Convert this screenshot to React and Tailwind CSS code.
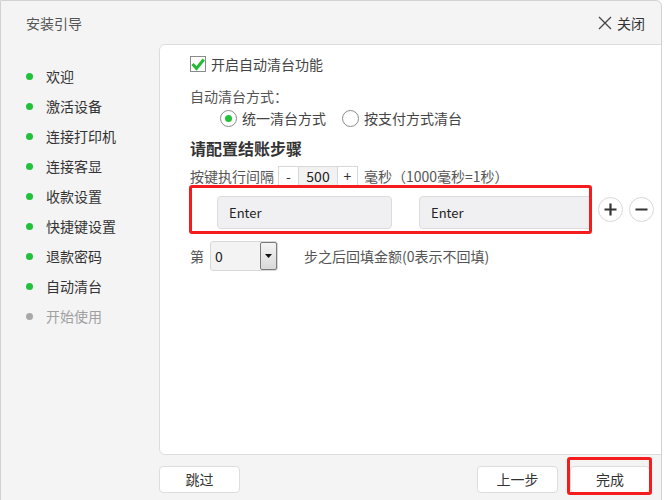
import React from "react";

const FONT = { fontFamily: '"Noto Sans CJK SC", "Noto Sans", sans-serif' };

const steps = [
  { t: "欢迎", done: true },
  { t: "激活设备", done: true },
  { t: "连接打印机", done: true },
  { t: "连接客显", done: true },
  { t: "收款设置", done: true },
  { t: "快捷键设置", done: true },
  { t: "退款密码", done: true },
  { t: "自动清台", done: true },
  { t: "开始使用", done: false },
];

export default function App() {
  return (
    <div className="w-[664px] h-[500px] bg-white overflow-hidden" style={FONT}>
      <div className="w-[662px] h-[502px] bg-[#f4f4f4] border border-[#d2d2d2] rounded-tr-[6px] flex flex-col overflow-hidden">
        {/* header */}
        <div className="h-[43px] flex items-center justify-between pl-[25px] pr-[16px] shrink-0">
          <span className="text-[14px] leading-[20px] text-[#555]">安装引导</span>
          <div className="flex items-center gap-[5px] text-[#333]">
            <svg width="14" height="14" viewBox="0 0 14 14">
              <path d="M1 1 L13 13 M13 1 L1 13" stroke="#444" strokeWidth="1.3" fill="none" />
            </svg>
            <span className="text-[14px] leading-[20px]">关闭</span>
          </div>
        </div>
        {/* body */}
        <div className="flex flex-1">
          {/* sidebar */}
          <div className="w-[158px] shrink-0 pt-[17px]">
            {steps.map((s) => (
              <div key={s.t} className="h-[30px] flex items-center">
                <span
                  className={
                    "ml-[25px] w-[7px] h-[7px] rounded-full " +
                    (s.done ? "bg-[#1fc23a]" : "bg-[#a8a8a8]")
                  }
                />
                <span
                  className={
                    "ml-[13px] text-[14px] leading-[20px] " +
                    (s.done ? "text-[#333]" : "text-[#a0a0a0]")
                  }
                >
                  {s.t}
                </span>
              </div>
            ))}
          </div>
          {/* right column */}
          <div className="flex-1 flex flex-col">
            <div className="h-[411px] mr-[-12px] bg-white border border-[#dcdcdc] rounded-[6px] flex flex-col text-[#444]">
              {/* checkbox row */}
              <div className="mt-[9px] ml-[30px] h-[20px] flex items-center">
                <span className="w-[16px] h-[16px] border border-[#8a8a8a] bg-white flex items-center justify-center">
                  <svg width="14" height="14" viewBox="0 0 14 14">
                    <path d="M1.5 7 L5.5 11.5 L12.8 2.5" stroke="#22bb33" strokeWidth="3" fill="none" strokeLinejoin="miter" />
                  </svg>
                </span>
                <span className="ml-[5px] text-[14px] leading-[20px] text-[#444]">开启自动清台功能</span>
              </div>
              {/* mode label */}
              <div className="mt-[12px] ml-[30px] h-[20px] flex items-center text-[14px] leading-[20px] text-[#555]">
                自动清台方式：
              </div>
              {/* radios */}
              <div className="mt-[2px] ml-[60px] h-[20px] flex items-center text-[14px] leading-[20px] text-[#444]">
                <span className="w-[17px] h-[17px] rounded-full border border-[#8a8a8a] flex items-center justify-center">
                  <span className="w-[7px] h-[7px] rounded-full bg-[#22c13a]" />
                </span>
                <span className="ml-[5px]">统一清台方式</span>
                <span className="ml-[16px] w-[17px] h-[17px] rounded-full border border-[#8a8a8a]" />
                <span className="ml-[5px]">按支付方式清台</span>
              </div>
              {/* heading */}
              <div className="mt-[8px] ml-[30px] h-[24px] flex items-center text-[16px] leading-[24px] font-bold text-[#333]">
                请配置结账步骤
              </div>
              {/* interval */}
              <div className="mt-[6px] ml-[30px] h-[20px] flex items-center text-[14px] leading-[20px] text-[#555]">
                <span>按键执行间隔</span>
                <div className="ml-[4px] flex h-[21px] border border-[#d8d8d8] text-[#333]">
                  <span className="w-[19px] flex items-center justify-center bg-white">-</span>
                  <span className="w-[40px] flex items-center justify-center bg-[#f2f2f2] border-x border-[#d8d8d8] text-[#222]">500</span>
                  <span className="w-[19px] flex items-center justify-center bg-white">+</span>
                </div>
                <span className="ml-[6px]">毫秒（1000毫秒=1秒）</span>
              </div>
              {/* keys row */}
              <div className="mt-[-1px] ml-[29px] flex items-center">
                <div className="w-[403px] h-[49px] border-[3px] border-[#f41c1c] rounded-[3px] overflow-hidden flex items-start pt-[8px] pl-[25px]">
                  <div className="w-[175px] h-[33px] shrink-0 bg-[#f0f0f3] border border-[#dcdcdc] rounded-[4px] flex items-center pl-[11px] text-[13px] text-[#222]">
                    Enter
                  </div>
                  <div className="ml-[27px] w-[175px] h-[33px] shrink-0 bg-[#f0f0f3] border border-[#dcdcdc] rounded-[4px] flex items-center pl-[11px] text-[13px] text-[#222]">
                    Enter
                  </div>
                </div>
                <div className="ml-[6px] w-[25px] h-[25px] rounded-full border border-[#d8d8d8] bg-white flex items-center justify-center">
                  <svg width="13" height="13" viewBox="0 0 13 13">
                    <path d="M6.5 0.5 V12.5 M0.5 6.5 H12.5" stroke="#333" strokeWidth="2.2" />
                  </svg>
                </div>
                <div className="ml-[6px] w-[25px] h-[25px] rounded-full border border-[#d8d8d8] bg-white flex items-center justify-center">
                  <svg width="13" height="13" viewBox="0 0 13 13">
                    <path d="M0.5 6.5 H12.5" stroke="#333" strokeWidth="2.2" />
                  </svg>
                </div>
              </div>
              {/* fill-back row */}
              <div className="mt-[7px] ml-[30px] flex items-center text-[14px] leading-[20px] text-[#555]">
                <span>第</span>
                <div className="ml-[6px] w-[68px] h-[30px] bg-[#f3f3f3] border border-[#d8d8d8] rounded-[3px] flex items-stretch">
                  <span className="flex-1 flex items-center pl-[4px] text-[#222]">0</span>
                  <span className="w-[17px] border border-[#7a7a7a] rounded-[2px] bg-gradient-to-b from-[#f4f4f4] to-[#d9d9d9] flex items-center justify-center">
                    <svg width="7" height="4" viewBox="0 0 7 4">
                      <path d="M0 0 H7 L3.5 4 Z" fill="#111" />
                    </svg>
                  </span>
                </div>
                <span className="ml-[26px]">步之后回填金额(0表示不回填)</span>
              </div>
            </div>
            {/* footer */}
            <div className="flex items-start pt-[11px] pr-[11px]">
              <button className="w-[81px] h-[27px] bg-white border border-[#dddddd] rounded-[4px] text-[14px] text-[#333] flex items-center justify-center">
                跳过
              </button>
              <button className="ml-auto w-[81px] h-[27px] bg-white border border-[#dddddd] rounded-[4px] text-[14px] text-[#333] flex items-center justify-center">
                上一步
              </button>
              <div className="relative ml-[12px]">
                <button className="w-[80px] h-[27px] bg-white border border-[#dddddd] rounded-[4px] text-[14px] text-[#333] flex items-center justify-center">
                  完成
                </button>
                <div className="absolute left-[-3px] top-[-9px] right-[-2px] bottom-[-2px] border-[3px] border-[#f41c1c] rounded-[3px] pointer-events-none" />
              </div>
            </div>
          </div>
        </div>
      </div>
    </div>
  );
}
